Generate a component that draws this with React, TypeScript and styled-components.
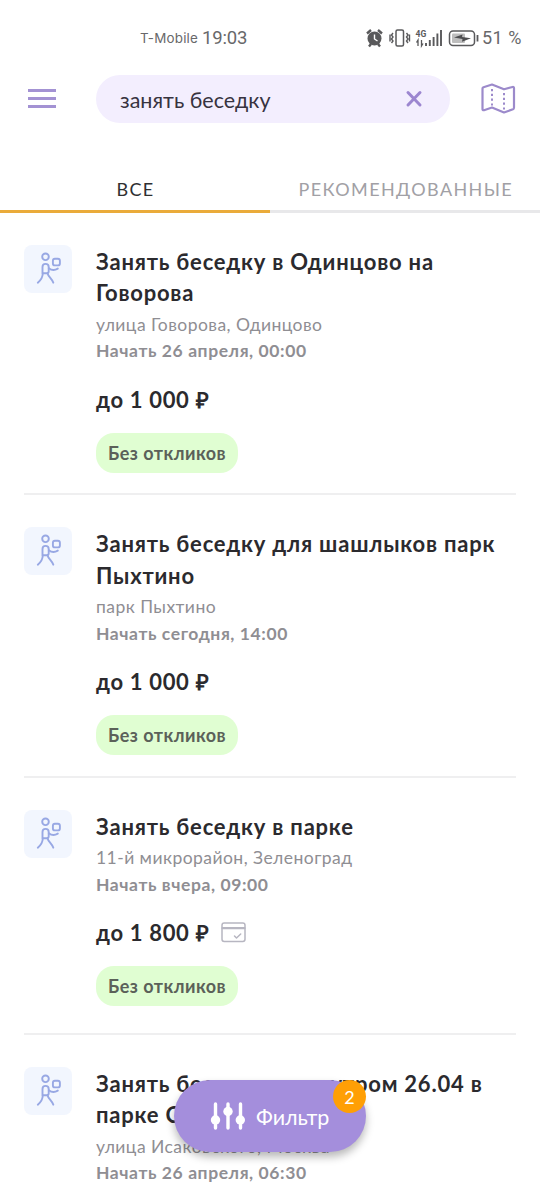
import React from 'react';
import styled, { createGlobalStyle } from 'styled-components';

const GlobalStyle = createGlobalStyle`
  * { box-sizing: border-box; }
  html, body { margin: 0; padding: 0; background: #fff; }
  body { font-family: Lato, "Open Sans", sans-serif; color: #2b2a2e; overflow: hidden; }
`;

const Screen = styled.div`
  position: relative;
  width: 540px;
  height: 1188px;
  overflow: hidden;
  background: #fff;
  display: flex;
  flex-direction: column;
`;

const StatusBar = styled.div`
  height: 75px;
  flex: none;
  padding: 0 18px 0 140px;
  display: flex;
  align-items: center;
  justify-content: space-between;
  color: #68686a;
  font-family: Inter, Roboto, sans-serif;
`;

const StatusGroup = styled.div`
  display: flex;
  align-items: center;
`;

const Carrier = styled.span`
  font-size: 13.4px;
  letter-spacing: 0.2px;
`;

const Clock = styled.span`
  font-family: Roboto, sans-serif;
  font-size: 18.5px;
  margin-left: 4px;
  letter-spacing: -0.2px;
`;

const Percent = styled.span`
  font-family: Roboto, sans-serif;
  font-size: 18px;
  letter-spacing: 0.5px;
  margin-left: 3px;
  width: 40px;
  white-space: nowrap;
`;

const Header = styled.header`
  height: 48px;
  flex: none;
  padding: 0 24px 0 28px;
  display: flex;
  align-items: center;
`;

const MenuButton = styled.div`
  width: 28px;
  height: 19px;
  margin: 0 40px 1px 0;
  display: flex;
  flex-direction: column;
  justify-content: space-between;
`;

const MenuBar = styled.span`
  height: 3px;
  background: #a392d3;
`;

const SearchField = styled.div`
  width: 354px;
  height: 48px;
  border-radius: 24px;
  background: #f3eefe;
  padding: 0 26px 0 24px;
  display: flex;
  align-items: center;
  justify-content: space-between;
  color: #37333f;
`;

const Query = styled.span`
  font-size: 21.5px;
  padding-top: 1px;
`;

const MapIcon = styled.svg`
  margin: 0 0 1px 31px;
  flex: none;
`;

const Tabs = styled.nav`
  display: flex;
  flex: none;
  height: 90px;
`;

const Tab = styled.div<{ $active?: boolean }>`
  width: 270px;
  padding: 0 0 9px ${p => (p.$active ? 1 : 28.5)}px;
  display: flex;
  align-items: flex-end;
  justify-content: ${p => (p.$active ? 'center' : 'flex-start')};
  line-height: 24px;
  font-size: 18px;
  letter-spacing: 1.38px;
  color: ${p => (p.$active ? '#2f2f31' : '#a1a0a5')};
  border-bottom: 3px solid ${p => (p.$active ? '#eaab3a' : '#e8e8ea')};
`;

const List = styled.main`
  padding: 0 24px;
`;

const Task = styled.article<{ $bottom: number }>`
  display: flex;
  gap: 24px;
  padding: 31.6px 0 ${p => p.$bottom}px;
  border-bottom: 2px solid #efeff0;
`;

const Tile = styled.div`
  width: 48px;
  height: 48px;
  flex: none;
  border-radius: 8px;
  background: #f2f6fe;
`;

const TaskBody = styled.div`
  padding-top: 1px;
  white-space: nowrap;
`;

const Title = styled.h2`
  margin: 0;
  font-size: 22px;
  font-weight: 700;
  letter-spacing: 0.79px;
  line-height: 31.5px;
`;

const Meta = styled.div<{ $strong?: boolean }>`
  font-size: 17.5px;
  line-height: 26.5px;
  font-weight: ${p => (p.$strong ? 700 : 400)};
  letter-spacing: ${p => (p.$strong ? 0.58 : 0.45)}px;
  color: #8f8e93;
`;

const Address = styled(Meta)`
  margin-top: 3px;
`;

const Price = styled.div`
  display: flex;
  align-items: center;
  gap: 12px;
  margin-top: 18px;
  height: 32px;
  font-size: 22px;
  font-weight: 700;
  letter-spacing: 0.68px;
`;

const Pill = styled.div`
  margin-top: 18px;
  width: 142px;
  height: 40px;
  border-radius: 18px;
  background: #e0fed2;
  display: flex;
  align-items: center;
  justify-content: center;
  font-size: 18px;
  font-weight: 700;
  letter-spacing: 0.47px;
  color: #5b6159;
`;

const FilterButton = styled.div`
  position: absolute;
  left: 174px;
  top: 1080px;
  width: 192px;
  height: 72px;
  border-radius: 36px;
  background: #a48edc;
  box-shadow: 0 5px 9px rgba(0, 0, 0, 0.28);
  padding-left: 36px;
  display: flex;
  align-items: center;
  gap: 11px;
  font-size: 21.5px;
  color: #fff;
`;

const FilterLabel = styled.span`
  padding-top: 2px;
`;

const Badge = styled.span`
  position: absolute;
  right: 0;
  top: 0;
  width: 33px;
  height: 33px;
  border-radius: 50%;
  background: #ff9f05;
  display: flex;
  align-items: center;
  justify-content: center;
  font-size: 18px;
`;

const StatusIcons = () => (
  <svg width="113" height="22" viewBox="0 0 113 22" fill="none">
    <g stroke="#59595b">
      <circle cx="8.500" cy="11.500" r="7" fill="#59595b" stroke="none" />
      <path d="M1 6.500 5 3M16 6.500 12 3M3 19.500l2-2.500M14 19.500l-2-2.500" strokeWidth="2.400" />
      <path d="M8.500 7.500V12l3 2" stroke="#fff" strokeWidth="1.400" />
      <rect x="30" y="3" width="7.500" height="16" rx="1.500" strokeWidth="1.500" />
      <path d="M27 6l-1.500 2 1.500 2-1.500 2 1.500 2-1.500 2M24 7.500v7M40.500 6l1.500 2-1.500 2 1.500 2-1.500 2 1.500 2M43.500 7.500v7" strokeWidth="1.400" />
      <path d="M60 19v-3M63.800 19v-6M67.600 19v-9M71.400 19V6.500M75 19V3" strokeWidth="1.900" />
      <path d="M52 19v-6l-1.500 2.500M55.500 13v6l1.500-2.500" strokeWidth="1.300" />
      <rect x="83.500" y="4" width="25" height="14.500" rx="3.500" strokeWidth="1.500" />
      <path d="M111.500 8v6.500" strokeWidth="1.800" />
      <rect x="86" y="6.500" width="13" height="9.500" rx="1" fill="#bdbdbd" stroke="none" />
      <path d="M88 10.500l8.500-3-.5 2.500 9 1.200-9 3.500.5-2.600z" fill="#4d4d4f" stroke="none" />
    </g>
    <text x="49.500" y="9.500" fontFamily="Roboto, sans-serif" fontSize="8.500" fontWeight="700" fill="#59595b">4G</text>
  </svg>
);

const CourierIcon = () => (
  <Tile>
    <svg width="48" height="48" viewBox="0 0 48 48" fill="none" stroke="#98a8e4" strokeWidth="1.900" strokeLinecap="round" strokeLinejoin="round">
      <circle cx="21.500" cy="11.800" r="3.300" />
      <rect x="28.900" y="13.800" width="7" height="6.600" rx="2" />
      <path d="M18.500 28.300v-6.200c0-2 1.200-3.200 3-3.200s3.200 1.200 3.200 3.200v4.200c0 1.300-.8 2-2 2z" />
      <path d="M24.800 23.200c2.600 2 6 2.200 9 .4" />
      <path d="M18.800 28.500c-.2 4-1.800 6.600-5 9.200M23.600 28.500c.8 3.400 4 4.700 5.700 9.200" />
    </svg>
  </Tile>
);

const CardIcon = () => (
  <svg width="25" height="21" viewBox="0 0 25 21" fill="none" stroke="#b7b6c1" strokeWidth="1.500" strokeLinecap="round" strokeLinejoin="round">
    <rect x="1" y="1" width="23" height="18.500" rx="2.200" />
    <path d="M1.500 6.200h22" strokeWidth="2.200" />
    <path d="M13.500 14l2 2 4.200-4" />
  </svg>
);

interface TaskData {
  title: string[];
  address: string;
  start: string;
  price?: string;
  card?: boolean;
  bottom: number;
}

const tasks: TaskData[] = [
  { title: ['Занять беседку в Одинцово на', 'Говорова'], address: 'улица Говорова, Одинцово', start: 'Начать 26 апреля, 00:00', price: 'до 1 000 ₽', bottom: 20.9 },
  { title: ['Занять беседку для шашлыков парк', 'Пыхтино'], address: 'парк Пыхтино', start: 'Начать сегодня, 14:00', price: 'до 1 000 ₽', bottom: 20.9 },
  { title: ['Занять беседку в парке'], address: '11-й микрорайон, Зеленоград', start: 'Начать вчера, 09:00', price: 'до 1 800 ₽', card: true, bottom: 26.9 },
  { title: ['Занять беседку рано утром 26.04 в', 'парке Строгино'], address: 'улица Исаковского, Москва', start: 'Начать 26 апреля, 06:30', bottom: 20.9 },
];

export default function App() {
  return (
    <Screen>
      <GlobalStyle />
      <StatusBar>
        <StatusGroup>
          <Carrier>T-Mobile</Carrier>
          <Clock>19:03</Clock>
        </StatusGroup>
        <StatusGroup>
          <StatusIcons />
          <Percent>51 %</Percent>
        </StatusGroup>
      </StatusBar>
      <Header>
        <MenuButton>
          <MenuBar />
          <MenuBar />
          <MenuBar />
        </MenuButton>
        <SearchField>
          <Query>занять беседку</Query>
          <svg width="20" height="20" viewBox="0 0 20 20" stroke="#9c86d0" strokeWidth="3" strokeLinecap="round">
            <path d="M4 3.500l12 12.500M16 3.500L4 16" />
          </svg>
        </SearchField>
        <MapIcon width="35" height="32" viewBox="0 0 35 32" fill="none" stroke="#9c8acb" strokeWidth="2.200" strokeLinejoin="round">
          <path d="M1.500 5.500Q1.500 4.500 2.500 4.200L11 1.500 23 6.300 31.500 4Q33 3.700 33 5V24.500Q33 25.800 32 26.200L23 29.500 11 24.500 3 27.200Q1.500 27.500 1.500 26.300Z" />
          <path d="M11 6v18M23 10v18" strokeWidth="2" strokeDasharray="2.200 2.600" />
        </MapIcon>
      </Header>
      <Tabs>
        <Tab $active>ВСЕ</Tab>
        <Tab>РЕКОМЕНДОВАННЫЕ</Tab>
      </Tabs>
      <List>
        {tasks.map(task => (
          <Task key={task.title[0]} $bottom={task.bottom}>
            <CourierIcon />
            <TaskBody>
              <Title>
                {task.title.map(line => (
                  <div key={line}>{line}</div>
                ))}
              </Title>
              <Address>{task.address}</Address>
              <Meta $strong>{task.start}</Meta>
              {task.price && (
                <>
                  <Price>
                    {task.price}
                    {task.card && <CardIcon />}
                  </Price>
                  <Pill>Без откликов</Pill>
                </>
              )}
            </TaskBody>
          </Task>
        ))}
      </List>
      <FilterButton>
        <svg width="35" height="28" viewBox="0 0 35 28" stroke="#fff" strokeWidth="3.400" strokeLinecap="round">
          <path d="M5.500 2v24M18 2v24M30.500 2v24" />
          <g fill="#fff" stroke="none">
            <circle cx="5.500" cy="18" r="4.700" />
            <circle cx="18" cy="9.500" r="4.700" />
            <circle cx="30.300" cy="18" r="4.700" />
          </g>
        </svg>
        <FilterLabel>Фильтр</FilterLabel>
        <Badge>2</Badge>
      </FilterButton>
    </Screen>
  );
}
